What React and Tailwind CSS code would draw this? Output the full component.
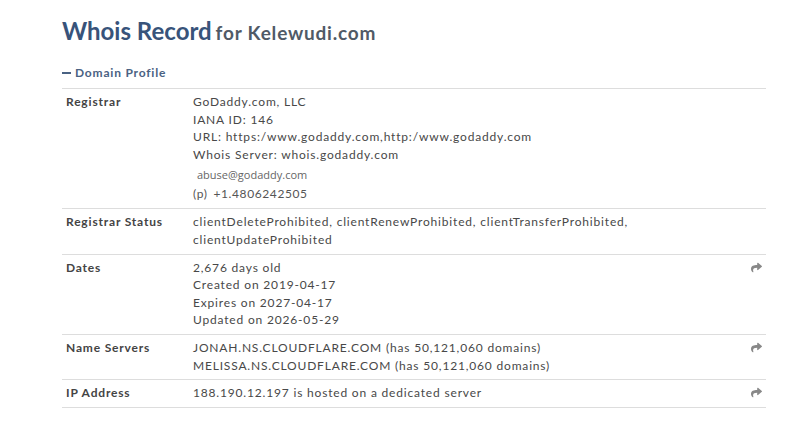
import React from "react";
import { FaShare } from "react-icons/fa";

const rows = [
  {
    label: "Registrar",
    lines: [
      "GoDaddy.com, LLC",
      "IANA ID: 146",
      "URL: https:/www.godaddy.com,http:/www.godaddy.com",
      "Whois Server: whois.godaddy.com",
    ],
    contact: true,
  },
  {
    label: "Registrar Status",
    lines: [
      "clientDeleteProhibited, clientRenewProhibited, clientTransferProhibited,",
      "clientUpdateProhibited",
    ],
  },
  {
    label: "Dates",
    lines: [
      "2,676 days old",
      "Created on 2019-04-17",
      "Expires on 2027-04-17",
      "Updated on 2026-05-29",
    ],
    share: true,
  },
  {
    label: "Name Servers",
    lines: [
      "JONAH.NS.CLOUDFLARE.COM (has 50,121,060 domains)",
      "MELISSA.NS.CLOUDFLARE.COM (has 50,121,060 domains)",
    ],
    share: true,
  },
  {
    label: "IP Address",
    lines: ["188.190.12.197 is hosted on a dedicated server"],
    share: true,
  },
];

const App = () => {
  return (
    <div className="w-[800px] h-[422px] bg-white pt-[15px] pl-[62px] font-['Lato',sans-serif] overflow-hidden">
      <div className="w-[704px]">
        <h1 className="leading-[32px] font-bold">
          <span className="text-[24px] text-[#38537a]">Whois Record</span>{" "}
          <span className="text-[19px] tracking-[0.8px] text-[#505a66]">
            for Kelewudi.com
          </span>
        </h1>

        {/* Domain Profile */}
        <div className="mt-[14px] pb-[6px] border-b border-[#dddddd] flex items-center text-[12px] leading-[18px] font-bold tracking-[0.8px] text-[#4a6283]">
          <span className="inline-block w-[9px] h-[2.5px] bg-[#4a6283] mr-[4px]"></span>
          Domain Profile
        </div>

        {rows.map((row, index) => (
          <div
            key={index}
            className="flex border-b border-[#dddddd] pt-[4px] pb-[5px] text-[12px] leading-[17.6px] tracking-[0.82px] text-[#484848]"
          >
            <div className="w-[131px] pl-[4px] font-bold text-[#444] shrink-0">
              {row.label}
            </div>
            <div className="flex-1">
              {row.lines.map((line, i) => (
                <div key={i}>{line}</div>
              ))}
              {row.contact && (
                <div className="mt-[2px] text-[#555] leading-[19px]">
                  <div className="pl-[4px] font-['Open_Sans',sans-serif] text-[11px] tracking-normal text-[#666]">
                    abuse@godaddy.com
                  </div>
                  <div className="text-[12px] tracking-[0.6px]">
                    (p)<span className="ml-[6px]">+1.4806242505</span>
                  </div>
                </div>
              )}
            </div>
            {row.share && (
              <div className="w-[20px] pt-[3px] pr-[4px] flex justify-end text-[#888]">
                <FaShare className="w-[11px] h-[11px]" />
              </div>
            )}
          </div>
        ))}
      </div>
    </div>
  );
};

export default App;
